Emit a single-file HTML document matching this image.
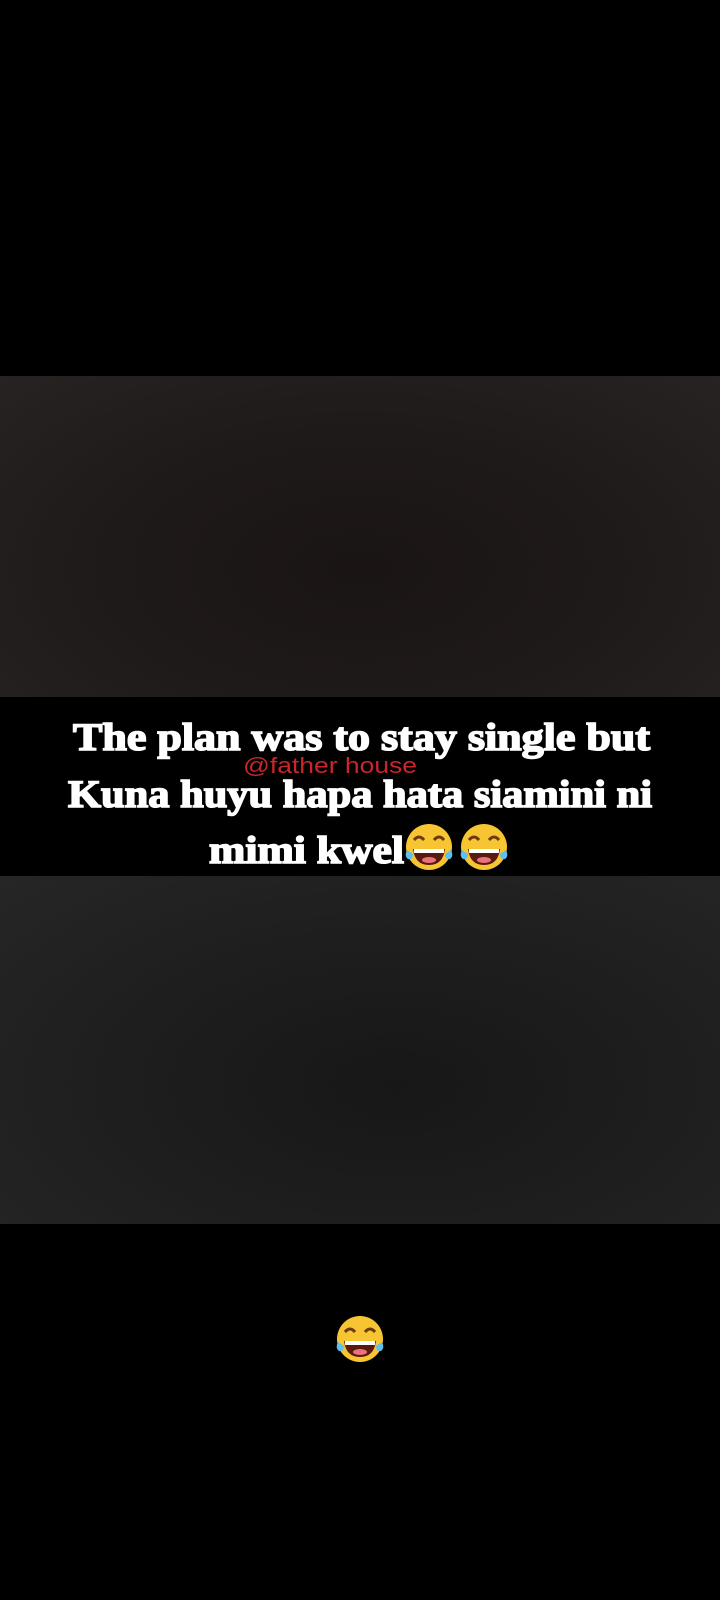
<!DOCTYPE html>
<html><head><meta charset="utf-8"><style>
html,body{margin:0;padding:0;background:#000;}
body{width:720px;height:1600px;position:relative;overflow:hidden;}
.top{position:absolute;left:0;top:376px;width:720px;height:321px;background:radial-gradient(ellipse at 50% 60%,#1a1414 0%,#1f1a1a 50%,#262322 100%);}
.bot{position:absolute;left:0;top:876px;width:720px;height:348px;background:radial-gradient(ellipse at 55% 60%,#171717 0%,#1e1e1e 50%,#262626 100%);}
svg{position:absolute;left:0;top:0;}
</style></head><body>
<div class="top"></div>
<div class="bot"></div>
<svg width="720" height="1600" viewBox="0 0 720 1600">
<defs>
<g id="emo">
<circle cx="25" cy="25" r="23" fill="#f7c531"/>
<path d="M10 18 q5 -6 10 0" stroke="#6b3a10" stroke-width="3" fill="none"/>
<path d="M30 18 q5 -6 10 0" stroke="#6b3a10" stroke-width="3" fill="none"/>
<path d="M9 27 h32 q-2 16 -16 16 q-14 0 -16 -16z" fill="#5a1a10"/>
<path d="M10 27 h30 v4 h-30z" fill="#fff"/>
<ellipse cx="25" cy="38" rx="7" ry="3" fill="#e8737b"/>
<path d="M3 28 q-3 6 1 9 q5 1 5 -5z" fill="#5fc0ec"/>
<path d="M47 28 q3 6 -1 9 q-5 1 -5 -5z" fill="#5fc0ec"/>
</g>
</defs>
<g font-family="'Liberation Serif',serif" font-weight="bold" font-size="39" fill="#fff" stroke="#fff" stroke-width="1.6">
<text x="73" y="750" textLength="577" lengthAdjust="spacingAndGlyphs">The plan was to stay single but</text>
<text x="68" y="807" textLength="584" lengthAdjust="spacingAndGlyphs">Kuna huyu hapa hata siamini ni</text>
<text x="209" y="863" textLength="195" lengthAdjust="spacingAndGlyphs">mimi kwel</text>
</g>
<text x="243" y="773" font-family="'Liberation Sans',sans-serif" font-size="22" fill="#c8262a" textLength="174" lengthAdjust="spacingAndGlyphs">@father house</text>
<use href="#emo" x="404" y="822"/>
<use href="#emo" x="459" y="822"/>
<use href="#emo" x="335" y="1314"/>
</svg>
</body></html>
